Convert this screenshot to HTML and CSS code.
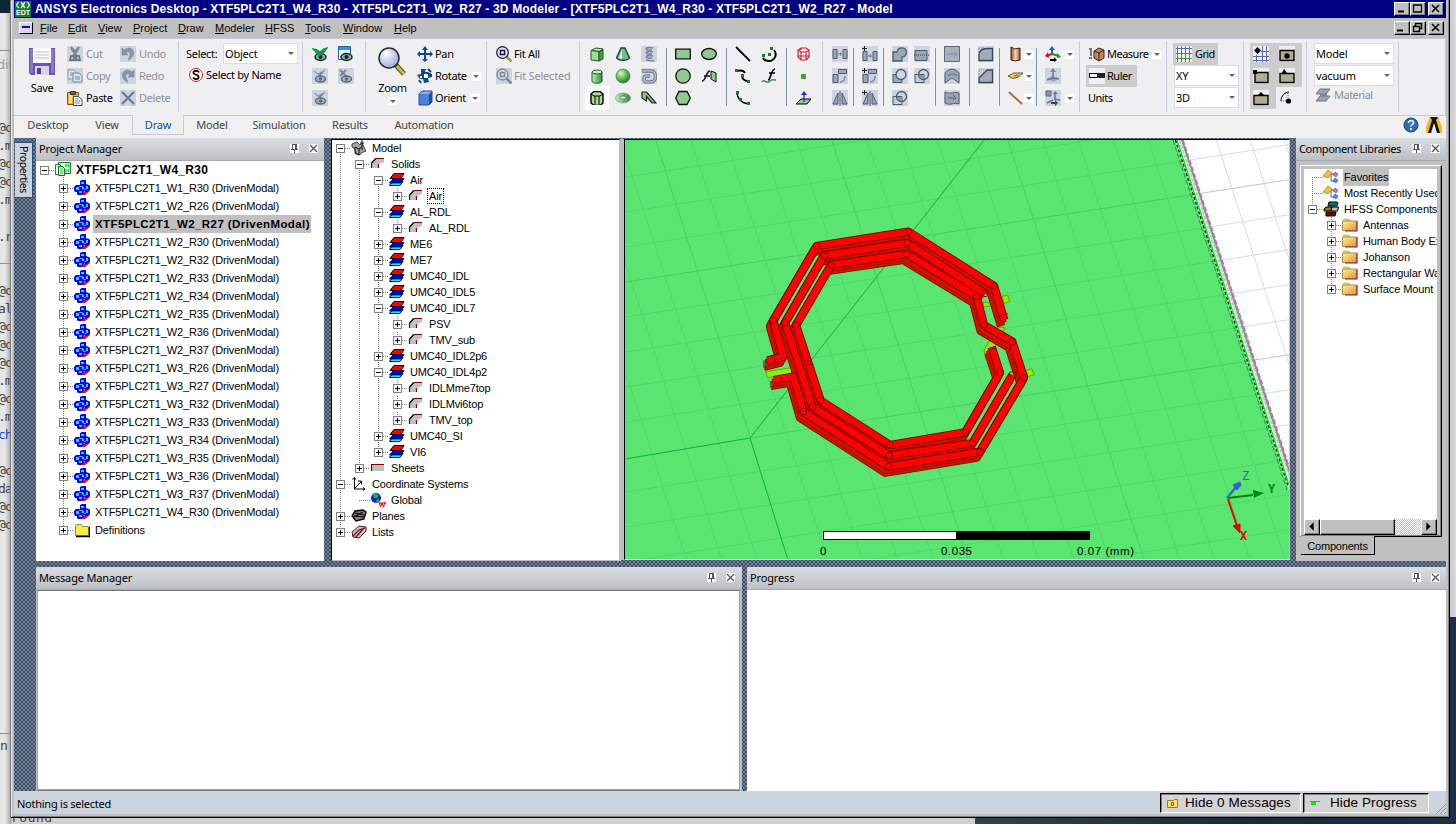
FILE: index.html
```html
<!DOCTYPE html>
<html lang="en">
<head>
<meta charset="utf-8">
<title>ANSYS Electronics Desktop</title>
<link rel="stylesheet" href="styles.css">
</head>
<body>
<svg class="sprite" width="0" height="0">
  <defs>
    <linearGradient id="gGreen" x1="0" x2="1"><stop offset="0" stop-color="#c4efb4"/><stop offset="1" stop-color="#2f8a3c"/></linearGradient>
    <radialGradient id="gBall" cx=".35" cy=".3" r=".8"><stop offset="0" stop-color="#d4f7c0"/><stop offset=".5" stop-color="#62b857"/><stop offset="1" stop-color="#1f6a2c"/></radialGradient>
    <radialGradient id="gLens" cx=".35" cy=".3" r=".8"><stop offset="0" stop-color="#fff"/><stop offset="1" stop-color="#8fa3dd"/></radialGradient>
    <linearGradient id="gFold" x1="0" y1="0" x2="1" y2="1"><stop offset="0" stop-color="#fff3b0"/><stop offset="1" stop-color="#e0951c"/></linearGradient>
    <linearGradient id="gWood" x1="0" x2="1"><stop offset="0" stop-color="#8a4a1c"/><stop offset=".5" stop-color="#ffd9b0"/><stop offset="1" stop-color="#9a5a2a"/></linearGradient>
  </defs>
  <symbol id="save" viewBox="0 0 26 27"><path d="M0 0h26v27H2l-2-2z" fill="#6c55ae"/><path d="M1 1h3v24H1zM22 1h3v24h-3z" fill="#8a78c8"/><path d="M4 0h18v15H4z" fill="#fafafa"/><path d="M6 4h14M6 7h14M6 10h14" stroke="#c4c4cc"/><path d="M6 18h14v9H6z" fill="#d5d5de"/><path d="M8 20h4v6H8z" fill="#55418f"/></symbol>
  <symbol id="cut" viewBox="0 0 16 16"><path d="M4 1l1 3 3 4 3-4 1-3-3 3-1 2-1-2zM8 7l-3 4M8 7l3 4" stroke="#7d8797" stroke-width="1.600" fill="#7d8797"/><path d="M4 10h3v4H3zM9 10h3l1 4H9z" fill="none" stroke="#6b7688" stroke-width="1.800"/></symbol>
  <symbol id="copy" viewBox="0 0 16 16"><path d="M1 2h6l2 2v7H1z" fill="#e2e6ee" stroke="#8b95a6"/><path d="M6 5h6l3 3v6H6z" fill="#dde2ea" stroke="#7d8797"/><path d="M3 5h3M3 7h3M8 9h5M8 11h5" stroke="#7d8797"/></symbol>
  <symbol id="paste" viewBox="0 0 16 16"><path d="M.5 2.500h11v12H.5z" fill="#f0b428" stroke="#7c5a14"/><path d="M2 4h3v9H2z" fill="#ffe08a"/><path d="M3.500 1.500h5v3h-5z" fill="#666" stroke="#333"/><path d="M6.500 6.500h5l3.500 3v6H6.500z" fill="#fff" stroke="#33506e"/><path d="M8 9h3M8 11h5M8 13h5" stroke="#5f8fc8"/></symbol>
  <symbol id="undo" viewBox="0 0 16 16"><path d="M2 2v7h6L6 7c4-3 6 0 2 7 7-2 8-12 0-12L4 4z" fill="#8b95a6" stroke="#7d8797" stroke-width=".6"/></symbol>
  <symbol id="redo" viewBox="0 0 16 16"><path d="M14 2v7H8l2-2C6 4 4 7 8 14 1 12 0 2 8 2l4 2z" fill="#8b95a6" stroke="#7d8797" stroke-width=".6"/></symbol>
  <symbol id="del" viewBox="0 0 16 16"><path d="M2 2l12 12M14 2L2 14" stroke="#6b7688" stroke-width="2"/></symbol>
  <symbol id="sname" viewBox="0 0 16 16"><circle cx="8" cy="8" r="6.500" fill="#fff" stroke="#f01010"/><path d="M11 5.500C10 3 5 3.500 5.500 6c.5 2 5 1.500 5.200 4C10.500 13 6 12.500 5 10.500" fill="none" stroke="#000" stroke-width="1.800"/></symbol>
  <symbol id="eye" viewBox="0 0 16 16"><ellipse cx="8.500" cy="11" rx="5.500" ry="3.500" fill="#8fa9a9" stroke="#102828" stroke-width="1.500"/><circle cx="8.500" cy="11" r="2" fill="#102828"/></symbol>
  <symbol id="show" viewBox="0 0 16 16"><use href="#eye"/><path d="M1 3l4 1 3 2 4-3 3-1-4 5-4 2-2-2z" fill="#119a3f" stroke="#119a3f" stroke-width="1.500"/></symbol>
  <symbol id="showd" viewBox="0 0 16 16"><path d="M.5 .5h12v13H.5z" fill="#eef5fb" stroke="#1d66a8"/><path d="M1 1h11v3H1z" fill="#3e8ed0"/><use href="#eye"/></symbol>
  <symbol id="eyeg" viewBox="0 0 16 16"><path d="M2 3l4 3 7-4-5 6z" fill="#7d8797" stroke="#8b95a6"/><ellipse cx="8.500" cy="11" rx="5" ry="3" fill="#aab3c2" stroke="#5d6879" stroke-width="1.500"/><circle cx="8.500" cy="11" r="1.700" fill="#5d6879"/></symbol>
  <symbol id="eyex" viewBox="0 0 16 16"><path d="M2 2l6 6M8 2L2 8" stroke="#7d8797" stroke-width="2"/><ellipse cx="8.500" cy="11" rx="5" ry="3" fill="#aab3c2" stroke="#5d6879" stroke-width="1.500"/><circle cx="8.500" cy="11" r="1.700" fill="#5d6879"/></symbol>
  <symbol id="zoom" viewBox="0 0 29 29"><path d="M18 18l8 9" stroke="#5c5216" stroke-width="5"/><path d="M19 19l7 8" stroke="#c9b84a" stroke-width="3"/><circle cx="11" cy="11" r="10" fill="url(#gLens)" stroke="#2b2b2b" stroke-width="1.500"/></symbol>
  <symbol id="pan" viewBox="0 0 16 16"><path d="M8 0l3 4H9v3h4V5l3 3-3 3V9H9v4h2l-3 3-3-3h2V9H3v2L0 8l3-3v2h4V4H5z" fill="#0c4a8a"/></symbol>
  <symbol id="rot" viewBox="0 0 16 16"><path d="M4 1h5l-1 3h3l4 2v3l-4 1 1 4-5 1-1-4H3L0 7l4-1z" fill="#0c4a8a"/><path d="M7 6h4v4H7zM3 8h2v2H3z" fill="#fff"/><path d="M11 1l3 3M2 12l2 3" stroke="#0c4a8a" stroke-width="2"/></symbol>
  <symbol id="orient" viewBox="0 0 16 16"><path d="M2 4h10v11H2z" fill="#4a82d8"/><path d="M2 4l3-3h10l-3 3z" fill="#86b0f0"/><path d="M12 4l3-3v11l-3 3z" fill="#234f9c"/><path d="M2 4l3-3h10v11l-3 3H2z" fill="none" stroke="#234f9c"/></symbol>
  <symbol id="fit" viewBox="0 0 16 16"><path d="M10.500 10.500l5 5" stroke="#a8923a" stroke-width="2.500"/><circle cx="6.500" cy="6.500" r="5.800" fill="#dfe6fa" stroke="#202038" stroke-width="1.300"/><path d="M4.500 4.500h4v4h-4z" fill="#fff" stroke="#101040" stroke-width="1.500"/></symbol>
  <symbol id="fitg" viewBox="0 0 16 16"><path d="M10.500 10.500l5 5" stroke="#7d8797" stroke-width="2.500"/><circle cx="6.500" cy="6.500" r="5.500" fill="#d5dae4" stroke="#7d8797" stroke-width="1.300"/><path d="M4.500 4.500h4v4h-4z" fill="none" stroke="#7d8797" stroke-width="1.500"/></symbol>
  <symbol id="box" viewBox="0 0 16 16"><path d="M2 4.500l5-2.500 7 1-4 2.500z" fill="#c9efbb" stroke="#1f5a28"/><path d="M2 4.500l8 1V15l-8-1z" fill="#9ede8e" stroke="#1f5a28"/><path d="M10 5.500l4-2V13l-4 2z" fill="#3f9a48" stroke="#1f5a28"/></symbol>
  <symbol id="cyl" viewBox="0 0 16 16"><path d="M3 4v9c0 3 10 3 10 0V4z" fill="url(#gGreen)" stroke="#1f5a28"/><ellipse cx="8" cy="4" rx="5" ry="2" fill="#c9efbb" stroke="#1f5a28"/></symbol>
  <symbol id="prism" viewBox="0 0 16 16"><path d="M2 4l3-2.500h6L14 4v9l-3 2.500H5L2 13z" fill="#a8dc98" stroke="#000" stroke-width="1.400"/><path d="M2 4l3 2h6l3-2M6 6v9M10 6v9" fill="none" stroke="#000"/></symbol>
  <symbol id="cone" viewBox="0 0 16 16"><path d="M6 2h4l4.500 10c-2 3-11 3-13 0z" fill="#79b889" stroke="#123c4c" stroke-width="1.300"/><path d="M7 3l-3 9 3 1z" fill="#d8f0d4"/></symbol>
  <symbol id="ball" viewBox="0 0 16 16"><circle cx="8" cy="8" r="7" fill="url(#gBall)" stroke="#2c7a38" stroke-width=".7"/></symbol>
  <symbol id="torus" viewBox="0 0 16 16"><ellipse cx="8" cy="8" rx="7.500" ry="5" fill="url(#gGreen)" stroke="#6a9a70" stroke-width=".6"/><ellipse cx="8" cy="7.500" rx="3" ry="1.500" fill="#eef3ee" stroke="#2c6a38" stroke-width=".7"/></symbol>
  <symbol id="helix" viewBox="0 0 16 16"><path d="M12 2C3 0 3 5 11 4M12 6C3 4 3 9 11 8M12 10C3 8 3 13 11 12M5 14l8 1" fill="none" stroke="#7d8797" stroke-width="1.600"/></symbol>
  <symbol id="spiral" viewBox="0 0 16 16"><path d="M1 3h9c6 0 6 11 0 11H6c-4 0-4-6 0-6h3" fill="none" stroke="#6b7688" stroke-width="3.400"/><path d="M1.500 3H10c6 0 6 11 0 11H6c-4 0-4-6 0-6h2.500" fill="none" stroke="#b4bccb" stroke-width="1.600"/></symbol>
  <symbol id="bond" viewBox="0 0 16 16"><path d="M1 2h4.500L15 13h-4L5.500 6.500V11L1 8z" fill="#8fc58d" stroke="#1c241c" stroke-width="1.200"/></symbol>
  <symbol id="rect" viewBox="0 0 16 16"><path d="M.7 3.200h14.600v9.600H.7z" fill="#8fc98f" stroke="#111" stroke-width="1.300"/></symbol>
  <symbol id="circ" viewBox="0 0 16 16"><circle cx="8" cy="8" r="7.200" fill="#8fc98f" stroke="#111" stroke-width="1.300"/></symbol>
  <symbol id="poly" viewBox="0 0 16 16"><path d="M4 1.500h8L15.300 8 12 14.500H4L.7 8z" fill="#8fc98f" stroke="#111" stroke-width="1.300"/></symbol>
  <symbol id="elli" viewBox="0 0 16 16"><ellipse cx="8" cy="8" rx="7.300" ry="5.500" fill="#8fc98f" stroke="#111" stroke-width="1.300"/></symbol>
  <symbol id="eqs" viewBox="0 0 16 16"><path d="M1 13c4 0 4-10 8-10M3 8h6" fill="none" stroke="#111" stroke-width="1.500"/><path d="M10 3l5 2v9l-5-3z" fill="#8fc98f" stroke="#111"/></symbol>
  <symbol id="line" viewBox="0 0 16 16"><path d="M1 1l14 14" stroke="#000" stroke-width="1.800"/></symbol>
  <symbol id="spl" viewBox="0 0 16 16"><path d="M2 3c4-1 7 0 8 2M8 7c-2 3 1 6 5 6" fill="none" stroke="#000" stroke-width="1.800"/><path d="M0 1h3v3H0zM6 6h3v3H6zM12 12h3v3h-3z" fill="#137a3c"/></symbol>
  <symbol id="arc" viewBox="0 0 16 16"><path d="M2 2c0 6 4 11 12 12" fill="none" stroke="#000" stroke-width="1.500"/><path d="M1 1h3v3H1zM4 8h3v3H4zM12 12h3v3h-3z" fill="#137a3c"/></symbol>
  <symbol id="arc2" viewBox="0 0 16 16"><path d="M13 4c4 5 0 11-5 11-3 0-5-1-6-3" fill="none" stroke="#000" stroke-width="2"/><path d="M9 1h3v3H9zM7 7h3v3H7zM1 8h3v3H1z" fill="#137a3c"/></symbol>
  <symbol id="eqc" viewBox="0 0 16 16"><path d="M7 12c3 0 3-11 7-11M8 5h6" fill="none" stroke="#000" stroke-width="1.700"/><path d="M1 14c2-4 5 3 8-1 2-2 3-1 6-1" fill="none" stroke="#4d8a5a" stroke-width="1.600"/></symbol>
  <symbol id="reg" viewBox="0 0 16 16"><path d="M3 4l3-2h5l3 2v7l-3 3H6l-3-3zM3 4l3 2h5l3-2M6 6v8M11 6v8M6 2v2M3 10h11" fill="none" stroke="#cf1b32" stroke-width="1.100"/></symbol>
  <symbol id="pt" viewBox="0 0 16 16"><path d="M6 6h5v5H6z" fill="#3da63d"/></symbol>
  <symbol id="plane" viewBox="0 0 16 16"><path d="M1 14l5-5h10l-4 5z" fill="#8fc98f" stroke="#000"/><path d="M9 12V4" stroke="#2020ff" stroke-width="1.300"/><path d="M6 5l3-4 3 4z" fill="#2020ff"/></symbol>
  <symbol id="dup" viewBox="0 0 16 16"><path d="M1 3.500h4v9H1zM11 3.500h4v9h-4z" fill="#9ea6b4" stroke="#4f5c70"/><path d="M6 8h3" stroke="#6b7688"/><path d="M8 6l2 2-2 2z" fill="#6b7688"/></symbol>
  <symbol id="dupr" viewBox="0 0 16 16"><path d="M1 6.500h5v8H1zM6.500 1.500h8v4h-8z" fill="#9ea6b4" stroke="#4f5c70"/><path d="M8 14c4 0 5-2 5-6" fill="none" stroke="#7d8797" stroke-width="1.500"/></symbol>
  <symbol id="mir" viewBox="0 0 16 16"><path d="M6 3v11H1zM10 3v11h5z" fill="#9ea6b4" stroke="#4f5c70"/><path d="M8 1v15" stroke="#4f5c70"/></symbol>
  <symbol id="plus" viewBox="0 0 16 16"><path d="M0 2.500h5M2.500 0v5" stroke="#222"/></symbol>
  <symbol id="uni" viewBox="0 0 16 16"><path d="M1 6h4c1-6 9-5 9.500 0 .3 3-2 5-4.500 5v4H1z" fill="#9ea6b4" stroke="#4f5c70" stroke-width="1.300"/></symbol>
  <symbol id="sub" viewBox="0 0 16 16"><path d="M1 6.500h9v8H1z" fill="#9ea6b4" stroke="#4f5c70"/><circle cx="9" cy="6.500" r="5" fill="#d0d6e2" stroke="#4f5c70" stroke-width="1.300"/></symbol>
  <symbol id="int" viewBox="0 0 16 16"><path d="M1 6.500h9v8H1z" fill="#c4cbd9" stroke="#4f5c70"/><circle cx="9.500" cy="6.500" r="5" fill="none" stroke="#4f5c70" stroke-width="1.300"/><path d="M5 7h5v4c-3 0-5-2-5-4z" fill="#8b95a6"/></symbol>
  <symbol id="split" viewBox="0 0 16 16"><path d="M1 4.500h12v10H1z" fill="#9ea6b4" stroke="#4f5c70"/><path d="M0 9h16" stroke="#333" stroke-dasharray="1 1"/></symbol>
  <symbol id="move" viewBox="0 0 16 16"><path d="M.5 .5h15v15H.5z" fill="#a9b1bf" stroke="#5d6879"/><path d="M3 8h8M10 5.500L13 8l-3 2.500" fill="none" stroke="#7d8797"/></symbol>
  <symbol id="wrap" viewBox="0 0 16 16"><path d="M1 5c4-5 10-5 14 0v10l-4-3c-2-2-4-2-6 0l-4 3z" fill="#9ea6b4" stroke="#4f5c70"/><path d="M4 8c3-3 6-3 9 0" fill="none" stroke="#5d6879"/></symbol>
  <symbol id="flag" viewBox="0 0 16 16"><path d="M1 2c5 3 9-1 14 1v11c-5-2-9 2-14-1z" fill="#9ea6b4" stroke="#4f5c70"/><path d="M4 8h6M9 5l3 3-3 2" fill="none" stroke="#4f5c70"/></symbol>
  <symbol id="fil" viewBox="0 0 16 16"><path d="M1 14.500V9c0-4 3-6 7-6.500h6.500v12z" fill="#a3abb9" stroke="#3b4658" stroke-width="1.300"/><path d="M1 8V2h6" fill="none" stroke="#7d8797" stroke-dasharray="1 1"/></symbol>
  <symbol id="cham" viewBox="0 0 16 16"><path d="M1 14.500V10l8-8h5.500v12.500z" fill="#a3abb9" stroke="#3b4658" stroke-width="1.300"/><path d="M1 8V2h6" fill="none" stroke="#7d8797" stroke-dasharray="1 1"/></symbol>
  <symbol id="wcyl" viewBox="0 0 16 16"><path d="M3 1l4 2 5-1v12l-5 1-4-1z" fill="url(#gWood)" stroke="#3a2010"/></symbol>
  <symbol id="wsheet" viewBox="0 0 16 16"><path d="M0 8l6-3h9l-5 4-5 1.500z" fill="#f5d97a" stroke="#7a4a14"/><path d="M4 8.500l4-2h4l-3 2z" fill="#a8803a"/></symbol>
  <symbol id="wline" viewBox="0 0 16 16"><path d="M1 2l13 12" stroke="#a9713e" stroke-width="2"/></symbol>
  <symbol id="cs" viewBox="0 0 16 16"><path d="M7 9V2" stroke="#0c64c0" stroke-width="2"/><path d="M4 4l3-4 3 4z" fill="#0c64c0"/><path d="M7 8l7 2" stroke="#109a20" stroke-width="2"/><path d="M12 7l4 4-4 1z" fill="#109a20"/><path d="M7 8l-6 2" stroke="#e01020" stroke-width="2"/><path d="M3 6l-3 4 4 2z" fill="#e01020"/><path d="M5 11v2h4v-2l3 3-3 2v-1H5" fill="#000"/></symbol>
  <symbol id="csg" viewBox="0 0 16 16"><path d="M2 11l5-3 7 2-5 4z" fill="#9ea6b4"/><path d="M8 11V3M8 10l6 1M8 10l-6 2" stroke="#6b7688" stroke-width="1.500"/><path d="M5 4l3-4 3 4z" fill="#7d8797"/></symbol>
  <symbol id="csf" viewBox="0 0 16 16"><path d="M1 1h5v5H1z" fill="#8b95a6" stroke="#5d6879"/><path d="M10 9V3M9 9l6 1M8 10l-6 3" stroke="#6b7688" stroke-width="1.500"/><path d="M8 4l2-3 3 3z" fill="#6b7688"/><path d="M6 12h4v-2l3 3-3 3v-2H6z" fill="#3b4658"/></symbol>
  <symbol id="meas" viewBox="0 0 16 16"><path d="M0 3h3M1 5h2M1 7h2M1 9h2M0 12h3" stroke="#000"/><path d="M5 5l5-3 5 2v8l-5 3-5-3z" fill="#c2885a" stroke="#3c2412"/><path d="M5 5l5 2 5-3M10 7v8" fill="none" stroke="#3c2412"/></symbol>
  <symbol id="ruler" viewBox="0 0 16 16"><path d="M0 0h16v16H0z" fill="#efeff3"/><path d="M.5 5.500h15v4H.5z" fill="#fff" stroke="#000"/><path d="M8 5h8v5H8z" fill="#222"/></symbol>
  <symbol id="grid" viewBox="0 0 16 16"><path d="M0 0h16v16H0z" fill="#f3f3f6"/><path d="M1.500 0v16M5.500 0v16M9.500 0v16M0 2.500h16M0 7.500h16" stroke="#5b66b8"/><path d="M13.500 0v16" stroke="#f04040"/><path d="M0 12.500h16" stroke="#2ea043"/></symbol>
  <symbol id="sgrid" viewBox="0 0 16 16"><path d="M0 0h16v16H0z" fill="#efeff3"/><path d="M9.500 0v16M13.500 0v16M3.500 9v7M0 10.500h16M8 5.500h8M0 14.500h16" stroke="#5b66b8"/><path d="M4.500 1l3.500 3.500L4.500 8 1 4.500z" fill="#000"/></symbol>
  <symbol id="sctr" viewBox="0 0 16 16"><path d="M0 0h16v16H0z" fill="#efeff3"/><path d="M1 4.500h14v10H1z" fill="#b0ae8c" stroke="#000" stroke-width="1.400"/><circle cx="8" cy="10" r="2.700"/></symbol>
  <symbol id="svert" viewBox="0 0 16 16"><path d="M0 0h16v16H0z" fill="#efeff3"/><path d="M2 4.500h13v10H2z" fill="#b0ae8c" stroke="#000" stroke-width="1.400"/><path d="M0 2h4v4H0z"/></symbol>
  <symbol id="sedge" viewBox="0 0 16 16"><path d="M0 0h16v16H0z" fill="#efeff3"/><path d="M1 5.500h14v9H1z" fill="#b0ae8c" stroke="#000" stroke-width="1.400"/><path d="M3 5l2-4 3 4z"/></symbol>
  <symbol id="smid" viewBox="0 0 16 16"><path d="M0 0h16v16H0z" fill="#efeff3"/><path d="M1 5.500h14v9H1z" fill="#b0ae8c" stroke="#000" stroke-width="1.400"/><path d="M4 6l4-4 4 4z"/></symbol>
  <symbol id="squad" viewBox="0 0 16 16"><path d="M2 11c0-5 4-9 8-9" fill="none" stroke="#000"/><path d="M2 11h7V3" fill="none" stroke="#5050e0" stroke-dasharray="1 1"/><circle cx="9.500" cy="11" r="2.600"/></symbol>
  <symbol id="mat" viewBox="0 0 16 16"><path d="M1 7l4-5h10l-4 5zM1 14l4-5h10l-4 5z" fill="#9aa3b3" stroke="#6b7688"/><path d="M5 8h7" stroke="#7d8797" stroke-width="2"/></symbol>
  <symbol id="help" viewBox="0 0 16 16"><circle cx="8" cy="8" r="7" fill="#2a6cc0" stroke="#123a70"/><path d="M5.500 6c0-3.500 5.500-3 5 0-.3 1.500-2.500 1.500-2.500 3.500M8 11v2" fill="none" stroke="#fff" stroke-width="1.600"/></symbol>
  <symbol id="ansys" viewBox="0 0 16 16"><path d="M4 0h8l4 16h-5L8 6l-3 10H0z" fill="#111"/><path d="M4 0L0 10v6h2L6 3zM12 0l4 10v6h-2L10 3z" fill="#f8b81c"/></symbol>
  <symbol id="edt" viewBox="0 0 16 16"><path d="M0 0h16v16H0z" fill="#147a3c"/><path d="M4 1c-3 2-3 4 0 6M6 1c2 2 2 4 0 6M10 1c-2 2-2 4 0 6M12 1c3 2 3 4 0 6" fill="none" stroke="#d8f0d8" stroke-width="1.500"/></symbol>
  <symbol id="proj" viewBox="0 0 16 16"><path d="M3.500 .5h12v11h-12z" fill="#fff" stroke="#0a7a1a"/><path d="M11 2v3M13.500 2v3M11 7v3M13.500 7v3" stroke="#00e020" stroke-width="1.500"/><path d="M.5 2.500h5v10h-5z" fill="#fff" stroke="#0a9a1a"/><path d="M3.500 4.500h4l2 2v7h-6z" fill="#eaffea" stroke="#0a7a1a"/><path d="M5 7h3M5 9h3M5 11h3" stroke="#00d020"/></symbol>
  <symbol id="dsn" viewBox="0 0 16 16"><path d="M5 15h6l5-4V6l-6 6z" fill="#f00"/><path d="M6 1l2-1h4v4l3 1 1 1v3l-3 3-3-1-1 3-2 1H4l-1-1v-2H1l-1-2V7l2-2h4z" fill="#00f"/><path d="M7 2h3v2H7zM2 7h3v3H2zM8 7h2v2H8zM12 6h2v3h-2zM5 11h3v2H5z" fill="#10e0f8"/><path d="M5 6h4v1H5zM10 9h2v1h-2z" fill="#80a0ff"/></symbol>
  <symbol id="defs" viewBox="0 0 16 16"><path d="M1.500 4.500l1-2h5l1 2h6v9h-13z" fill="#f4ee48" stroke="#8e8e40"/><path d="M2 14.500h13.500V5" fill="none" stroke="#000" stroke-width="1.300"/></symbol>
  <symbol id="model" viewBox="0 0 16 16"><path d="M1 4l5-2 3 3 2-2 4 8-5 2-1 2-4-1-1-5-3-2z" fill="#a4a4a4" stroke="#222" stroke-width=".8"/><path d="M4 7l4 2v6M11 0v10M4 7v6l4 2M8 9l3-2M9 3h4" fill="none" stroke="#111"/></symbol>
  <symbol id="solid" viewBox="0 0 16 16"><path d="M1 12V7l4-5h9v4l-5 2v4z" fill="#c0c0c0"/><path d="M1.500 12V7M8.500 12V8M6 2.500h8" fill="none" stroke="#800000" stroke-width="1.200"/><path d="M1.500 7L6 2.500" stroke="#000" stroke-width="1.200"/></symbol>
  <symbol id="layer" viewBox="0 0 16 16"><path d="M.5 13.500l3-4H14l-3 4z" fill="#0ff" stroke="#000"/><path d="M.5 11l4-4.500h10.500L12 11z" fill="#0000f8" stroke="#000" stroke-width=".8"/><path d="M1 6.500l4-5h10l-3 5z" fill="#f00" stroke="#000"/></symbol>
  <symbol id="sheet" viewBox="0 0 16 16"><path d="M1 4h13v7H1z" fill="#c0c0c0"/><path d="M1.500 11V4.500H14" fill="none" stroke="#800000" stroke-width="1.200"/></symbol>
  <symbol id="axes" viewBox="0 0 16 16"><path d="M3.500 2v11H14M1.500 3.500l2-2 1 2M12 11.500l2 1.500-2 1.500M4 12l6-6M7 5h3.500v3.500" fill="none" stroke="#000"/></symbol>
  <symbol id="globe" viewBox="0 0 16 16"><circle cx="6" cy="6" r="5" fill="#1020e0"/><path d="M3 2l3-1 3 3-2 2H4zM6 8l3-1v3l-2 1z" fill="#10c020"/><path d="M9 10l1.500 5 1.500-4 1.500 4L15 10M9 11h7" fill="none" stroke="#e00000"/></symbol>
  <symbol id="planes" viewBox="0 0 16 16"><path d="M1 8l3-5 8-1 3 2-2 7-8 2z" fill="#808080" stroke="#000" stroke-width="1.400"/><path d="M3 9l9-5M4 5l9 2M2 8l11 1" stroke="#000" stroke-width="1.200"/></symbol>
  <symbol id="lists" viewBox="0 0 16 16"><path d="M1 8l7-6 7 1v4l-7 7-6-1z" fill="#c0c0c0" stroke="#701010"/><path d="M2 12l6-6 6-2M5 13l7-8" fill="none" stroke="#701010" stroke-width="1.200"/></symbol>
  <symbol id="fav" viewBox="0 0 16 16"><path d="M6 5h6M8 5v7h4" fill="none" stroke="#506080"/><path d="M5 1l4 3-4 5-5-2z" fill="#f4c030" stroke="#a87410" stroke-width=".7"/><path d="M12 3l3 2-2 3-3-2z" fill="#d860e0" stroke="#8a2a90" stroke-width=".6"/><path d="M12 9l3 2-2 3-3-2z" fill="#4a90f0" stroke="#1c4a98" stroke-width=".6"/></symbol>
  <symbol id="comp" viewBox="0 0 16 16"><path d="M6 1h8l1 1-1 3H5z" fill="#0a7a7a" stroke="#000"/><path d="M1 8l2-2h6l-1 4H1z" fill="#8a8000" stroke="#000"/><path d="M9 6h6.500l-1 4H8z" fill="#c0c0c0" stroke="#000"/><path d="M3 11h10l-1 4H3z" fill="#7a0000" stroke="#000"/></symbol>
  <symbol id="fold" viewBox="0 0 16 16"><path d="M1 4l1-2h5l1 2z" fill="#e8dca0" stroke="#b8a050" stroke-width=".6"/><path d="M.5 4h14v9.500H.5z" fill="url(#gFold)" stroke="#b07a18" stroke-width=".8"/><path d="M15 4v10H3" fill="none" stroke="#8a1a6a" stroke-width="1.200"/></symbol>
  <symbol id="pin" viewBox="0 0 9 9"><path d="M0 0h9v9H0z" fill="#fff"/><path d="M2.500 0v5M5.500 0v5M6.500 0v5M2 .5h5M1 5.500h7M4.500 5v4" stroke="#555" fill="none"/></symbol>
  <symbol id="cls" viewBox="0 0 9 9"><path d="M0 0h9v9H0z" fill="#fff"/><path d="M1 1l7 7M8 1L1 8" stroke="#555" stroke-width="1.300"/></symbol>
</svg>

<div class="desktop">
  <div class="bgtop"></div>
  <div class="bgline l1"></div><div class="bgline l2"></div><div class="bgline l3"></div>
  <div class="bgtext"><span class="b1">dit</span><span class="b2">@c</span><span class="b3">.m</span><span class="b4">@c</span><span class="b5">@c</span><span class="b6">.m</span><span class="b7">.r</span><span class="b8">@c</span><span class="b9">al</span><span class="b10">@c</span><span class="b11">@c</span><span class="b12">@c</span><span class="b13">.m</span><span class="b14">@c</span><span class="b15">.m</span><span class="b16">ch</span><span class="b17">@c</span><span class="b18">da</span><span class="b19">@c</span><span class="b20">@c</span><span class="b21">n</span><span class="b22">round</span></div>
  <div class="bgdark"></div>
  <main class="window">
    <header class="title"><div class="logo"><svg class="i16"><use href="#edt"/></svg><em>EDT</em></div><span>ANSYS Electronics Desktop - XTF5PLC2T1_W4_R30 - XTF5PLC2T1_W2_R27 - 3D Modeler - [XTF5PLC2T1_W4_R30 - XTF5PLC2T1_W2_R27 - Model</span>
      <div class="wb"><b><svg viewBox="0 0 13 11"><path d="M3 8.500h6" stroke="#000" stroke-width="2"/></svg></b><b><svg viewBox="0 0 13 11"><path d="M2.500 2h8v7h-8zM2 2h9" fill="none" stroke="#000" stroke-width="1.300"/></svg></b><b class="sp"><svg viewBox="0 0 13 11"><path d="M3 2l7 7M10 2L3 9" stroke="#000" stroke-width="1.600"/></svg></b></div></header>
    <nav class="menu"><i class="mdi"></i><span><u>F</u>ile</span><span><u>E</u>dit</span><span><u>V</u>iew</span><span><u>P</u>roject</span><span><u>D</u>raw</span><span><u>M</u>odeler</span><span><u>H</u>FSS</span><span><u>T</u>ools</span><span><u>W</u>indow</span><span><u>H</u>elp</span>
      <div class="wb"><b><svg viewBox="0 0 13 11"><path d="M2 8.500h6" stroke="#000" stroke-width="2"/></svg></b><b><svg viewBox="0 0 13 11"><path d="M4.500 1.500h6v5h-6z" fill="none" stroke="#000" stroke-width="1.500"/><path d="M2.500 4.500h6v5h-6z" fill="#c0c0c0" stroke="#000" stroke-width="1.400"/></svg></b><b class="sp"><svg viewBox="0 0 13 11"><path d="M3 2l7 7M10 2L3 9" stroke="#000" stroke-width="1.600"/></svg></b></div></nav>

    <section class="ribbon">
      <div class="grp g1">
        <div class="big save"><svg width="26" height="27"><use href="#save"/></svg><span>Save</span></div>
        <div class="col c2"><div class="off"><svg class="i16"><use href="#cut"/></svg>Cut</div><div class="off"><svg class="i16"><use href="#copy"/></svg>Copy</div><div><svg class="i16"><use href="#paste"/></svg>Paste</div></div>
        <div class="col"><div class="off"><svg class="i16"><use href="#undo"/></svg>Undo</div><div class="off"><svg class="i16"><use href="#redo"/></svg>Redo</div><div class="off"><svg class="i16"><use href="#del"/></svg>Delete</div></div>
      </div>
      <div class="grp g2"><div class="selrow">Select:<div class="combo w75">Object</div></div><div class="nrow"><svg class="i16"><use href="#sname"/></svg>Select by Name</div></div>
      <div class="grp g3"><div class="ic"><svg><use href="#show"/></svg><svg class="d"><use href="#eyeg"/></svg><svg class="d"><use href="#eyeg"/></svg></div><div class="ic m10"><svg><use href="#showd"/></svg><svg class="d"><use href="#eyex"/></svg></div></div>
      <div class="grp g4"><div class="big zoomb"><svg width="29" height="29"><use href="#zoom"/></svg><span>Zoom</span><i class="dd"></i></div>
        <div class="col"><div><svg class="i16"><use href="#pan"/></svg>Pan</div><div><svg class="i16"><use href="#rot"/></svg>Rotate<i class="dd"></i></div><div><svg class="i16"><use href="#orient"/></svg>Orient<i class="dd"></i></div></div></div>
      <div class="grp g5"><div class="col"><div><svg class="i16"><use href="#fit"/></svg>Fit All</div><div class="off"><svg class="i16"><use href="#fitg"/></svg>Fit Selected</div></div></div>
      <div class="grp g6">
        <div class="ic"><svg><use href="#box"/></svg><svg><use href="#cyl"/></svg><svg class="on"><use href="#prism"/></svg></div>
        <div class="ic m10"><svg><use href="#cone"/></svg><svg><use href="#ball"/></svg><svg><use href="#torus"/></svg></div>
        <div class="ic m10"><svg class="d"><use href="#helix"/></svg><svg class="d"><use href="#spiral"/></svg><svg><use href="#bond"/></svg></div>
        <i class="sep m9"></i>
        <div class="ic m8"><svg><use href="#rect"/></svg><svg><use href="#circ"/></svg><svg><use href="#poly"/></svg></div>
        <div class="ic m10"><svg><use href="#elli"/></svg><svg><use href="#eqs"/></svg></div>
        <i class="sep m9"></i>
        <div class="ic m8"><svg><use href="#line"/></svg><svg><use href="#spl"/></svg><svg><use href="#arc"/></svg></div>
        <div class="ic m10"><svg><use href="#arc2"/></svg><svg><use href="#eqc"/></svg></div>
        <i class="sep m9"></i>
        <div class="ic m8"><svg><use href="#reg"/></svg><svg><use href="#pt"/></svg><svg><use href="#plane"/></svg></div>
      </div>
      <div class="grp g7">
        <div class="ic"><svg class="d"><use href="#dup"/></svg><svg class="d"><use href="#dupr"/></svg><svg class="d"><use href="#mir"/></svg></div>
        <i class="sep m5"></i>
        <div class="ic m8"><svg class="d"><use href="#dup" y="2"/><use href="#plus"/></svg><svg class="d"><use href="#dupr"/><use href="#plus"/></svg><svg class="d"><use href="#mir"/><use href="#plus"/></svg></div>
        <i class="sep m5"></i>
        <div class="ic m8"><svg class="d"><use href="#uni"/></svg><svg class="d"><use href="#sub"/></svg><svg class="d"><use href="#int"/></svg></div>
        <div class="ic m6"><svg class="d"><use href="#split"/></svg><svg class="d"><use href="#int"/></svg></div>
        <i class="sep m5"></i>
        <div class="ic m8"><svg class="d"><use href="#move"/></svg><svg class="d"><use href="#wrap"/></svg><svg class="d"><use href="#flag"/></svg></div>
        <i class="sep m9"></i>
        <div class="ic m8"><svg class="d"><use href="#fil"/></svg><svg class="d"><use href="#cham"/></svg></div>
        <i class="sep m5"></i>
        <div class="ic m8"><svg><use href="#wcyl"/></svg><svg><use href="#wsheet"/></svg><svg><use href="#wline"/></svg></div>
        <div class="dds"><i class="dd"></i><i class="dd"></i><i class="dd"></i></div>
        <i class="sep m3"></i>
        <div class="ic m8"><svg><use href="#cs"/></svg><svg class="d"><use href="#csg"/></svg><svg class="d"><use href="#csf"/></svg></div>
        <div class="dds m4"><i class="dd"></i><i class="dd hid"></i><i class="dd"></i></div>
      </div>
      <div class="grp g8"><div class="col"><div><svg class="i16"><use href="#meas"/></svg>Measure<i class="dd"></i></div><div><span class="hl"><svg class="i16"><use href="#ruler"/></svg>Ruler</span></div><div>Units</div></div></div>
      <div class="grp g9"><span class="hl"><svg class="i16"><use href="#grid"/></svg>Grid</span><div class="combo">XY</div><div class="combo">3D</div></div>
      <div class="grp g10"><div class="snap"><svg class="i16"><use href="#sgrid"/></svg><svg class="i16"><use href="#sctr"/></svg><svg class="i16"><use href="#svert"/></svg><svg class="i16"><use href="#sedge"/></svg></div><div class="snap half"><svg class="i16"><use href="#smid"/></svg><svg class="i16"><use href="#squad"/></svg></div></div>
      <div class="grp g11"><div class="combo">Model</div><div class="combo">vacuum</div><div class="off mt"><svg class="i16"><use href="#mat"/></svg>Material</div></div>
    </section>
    <nav class="tabs"><span class="t1">Desktop</span><span class="t2">View</span><span class="t3">Draw</span><span class="t4">Model</span><span class="t5">Simulation</span><span class="t6">Results</span><span class="t7">Automation</span><div class="tr"><svg class="i16"><use href="#help"/></svg><svg class="i16"><use href="#ansys"/></svg></div></nav>

    <section class="work">
      <aside class="strip"><span class="vt">Properties</span></aside>
      <div class="panes">
        <div class="upper">
          <section class="pm">
            <h2 class="ph">Project Manager<svg class="pn"><use href="#pin"/></svg><svg class="pc"><use href="#cls"/></svg></h2>
            <div class="ptree">
              <div class="r root"><i class="x m"></i><svg class="i16"><use href="#proj"/></svg><b>XTF5PLC2T1_W4_R30</b></div>
              <div class="r"><i class="x"></i><svg class="i16"><use href="#dsn"/></svg><span>XTF5PLC2T1_W1_R30 (DrivenModal)</span></div>
              <div class="r"><i class="x"></i><svg class="i16"><use href="#dsn"/></svg><span>XTF5PLC2T1_W2_R26 (DrivenModal)</span></div>
              <div class="r"><i class="x"></i><svg class="i16"><use href="#dsn"/></svg><b class="cur">XTF5PLC2T1_W2_R27 (DrivenModal)</b></div>
              <div class="r"><i class="x"></i><svg class="i16"><use href="#dsn"/></svg><span>XTF5PLC2T1_W2_R30 (DrivenModal)</span></div>
              <div class="r"><i class="x"></i><svg class="i16"><use href="#dsn"/></svg><span>XTF5PLC2T1_W2_R32 (DrivenModal)</span></div>
              <div class="r"><i class="x"></i><svg class="i16"><use href="#dsn"/></svg><span>XTF5PLC2T1_W2_R33 (DrivenModal)</span></div>
              <div class="r"><i class="x"></i><svg class="i16"><use href="#dsn"/></svg><span>XTF5PLC2T1_W2_R34 (DrivenModal)</span></div>
              <div class="r"><i class="x"></i><svg class="i16"><use href="#dsn"/></svg><span>XTF5PLC2T1_W2_R35 (DrivenModal)</span></div>
              <div class="r"><i class="x"></i><svg class="i16"><use href="#dsn"/></svg><span>XTF5PLC2T1_W2_R36 (DrivenModal)</span></div>
              <div class="r"><i class="x"></i><svg class="i16"><use href="#dsn"/></svg><span>XTF5PLC2T1_W2_R37 (DrivenModal)</span></div>
              <div class="r"><i class="x"></i><svg class="i16"><use href="#dsn"/></svg><span>XTF5PLC2T1_W3_R26 (DrivenModal)</span></div>
              <div class="r"><i class="x"></i><svg class="i16"><use href="#dsn"/></svg><span>XTF5PLC2T1_W3_R27 (DrivenModal)</span></div>
              <div class="r"><i class="x"></i><svg class="i16"><use href="#dsn"/></svg><span>XTF5PLC2T1_W3_R32 (DrivenModal)</span></div>
              <div class="r"><i class="x"></i><svg class="i16"><use href="#dsn"/></svg><span>XTF5PLC2T1_W3_R33 (DrivenModal)</span></div>
              <div class="r"><i class="x"></i><svg class="i16"><use href="#dsn"/></svg><span>XTF5PLC2T1_W3_R34 (DrivenModal)</span></div>
              <div class="r"><i class="x"></i><svg class="i16"><use href="#dsn"/></svg><span>XTF5PLC2T1_W3_R35 (DrivenModal)</span></div>
              <div class="r"><i class="x"></i><svg class="i16"><use href="#dsn"/></svg><span>XTF5PLC2T1_W3_R36 (DrivenModal)</span></div>
              <div class="r"><i class="x"></i><svg class="i16"><use href="#dsn"/></svg><span>XTF5PLC2T1_W3_R37 (DrivenModal)</span></div>
              <div class="r"><i class="x"></i><svg class="i16"><use href="#dsn"/></svg><span>XTF5PLC2T1_W4_R30 (DrivenModal)</span></div>
              <div class="r"><i class="x"></i><svg class="i16"><use href="#defs"/></svg><span>Definitions</span></div>
            </div>
          </section>
          <section class="mtree">
            <div class="r"><i class="x m"></i><svg class="i16"><use href="#model"/></svg><span>Model</span></div>
            <div class="r d1"><i class="x m"></i><svg class="i16"><use href="#solid"/></svg><span>Solids</span></div>
            <div class="r d2"><i class="x m"></i><svg class="i16"><use href="#layer"/></svg><span>Air</span></div>
            <div class="r d3"><i class="x"></i><svg class="i16"><use href="#solid"/></svg><span class="foc">Air</span></div>
            <div class="r d2"><i class="x m"></i><svg class="i16"><use href="#layer"/></svg><span>AL_RDL</span></div>
            <div class="r d3"><i class="x"></i><svg class="i16"><use href="#solid"/></svg><span>AL_RDL</span></div>
            <div class="r d2"><i class="x"></i><svg class="i16"><use href="#layer"/></svg><span>ME6</span></div>
            <div class="r d2"><i class="x"></i><svg class="i16"><use href="#layer"/></svg><span>ME7</span></div>
            <div class="r d2"><i class="x"></i><svg class="i16"><use href="#layer"/></svg><span>UMC40_IDL</span></div>
            <div class="r d2"><i class="x"></i><svg class="i16"><use href="#layer"/></svg><span>UMC40_IDL5</span></div>
            <div class="r d2"><i class="x m"></i><svg class="i16"><use href="#layer"/></svg><span>UMC40_IDL7</span></div>
            <div class="r d3"><i class="x"></i><svg class="i16"><use href="#solid"/></svg><span>PSV</span></div>
            <div class="r d3"><i class="x"></i><svg class="i16"><use href="#solid"/></svg><span>TMV_sub</span></div>
            <div class="r d2"><i class="x"></i><svg class="i16"><use href="#layer"/></svg><span>UMC40_IDL2p6</span></div>
            <div class="r d2"><i class="x m"></i><svg class="i16"><use href="#layer"/></svg><span>UMC40_IDL4p2</span></div>
            <div class="r d3"><i class="x"></i><svg class="i16"><use href="#solid"/></svg><span>IDLMme7top</span></div>
            <div class="r d3"><i class="x"></i><svg class="i16"><use href="#solid"/></svg><span>IDLMvi6top</span></div>
            <div class="r d3"><i class="x"></i><svg class="i16"><use href="#solid"/></svg><span>TMV_top</span></div>
            <div class="r d2"><i class="x"></i><svg class="i16"><use href="#layer"/></svg><span>UMC40_SI</span></div>
            <div class="r d2"><i class="x"></i><svg class="i16"><use href="#layer"/></svg><span>VI6</span></div>
            <div class="r d1"><i class="x"></i><svg class="i16"><use href="#sheet"/></svg><span>Sheets</span></div>
            <div class="r"><i class="x m"></i><svg class="i16"><use href="#axes"/></svg><span>Coordinate Systems</span></div>
            <div class="r d1"><i class="x none"></i><svg class="i16"><use href="#globe"/></svg><span>Global</span></div>
            <div class="r"><i class="x"></i><svg class="i16"><use href="#planes"/></svg><span>Planes</span></div>
            <div class="r"><i class="x"></i><svg class="i16"><use href="#lists"/></svg><span>Lists</span></div>
          </section>
          <section class="view">
            <svg width="664" height="419" viewBox="625 140 664 419">
              <defs>
                <g id="hl"><path d="M600 251l700-108M600 216l700-108M600 181l700-108M600 146l700-108M600 321l700-108M600 356l700-108M600 391l700-108M600 426l700-108M600 496l700-108M600 531l700-108M600 566l700-108M600 601l700-108M600 671l700-108M600 636l700-108"/></g>
                <g id="vl"><path d="M546.900 130l143 440M582.100 130l143 440M617.300 130l143 440M687.700 130l143 440M722.900 130l143 440M758.100 130l143 440M793.300 130l143 440M863.700 130l143 440M898.900 130l143 440M934.100 130l143 440M969.300 130l143 440M1039.700 130l143 440M1074.900 130l143 440M1110.100 130l143 440M1145.300 130l143 440M1213 130l143 440M1247 130l143 440M1281 130l143 440"/></g>
                <path id="t1" d="M763 315L732 213 475 50 200 93 70 316 100 425 52 437"/>
                <path id="t2" d="M705 235L472 84 222 122 105 323 187 575 418 722 668 684 787 480"/>
                <path id="t3" d="M725 396L750 473 646 652 420 690 212 557 138 330 243 150 470 117 680 245 702 330 787 380 822 488 690 710 416 755 160 590 130 485 72 495"/>
                <g id="coil"><use href="#t1"/><use href="#t2"/><use href="#t3"/></g>
                <clipPath id="gc"><path d="M625 140h550l114 350v70H625z"/></clipPath>
              </defs>
              <path d="M625 140h664v420H625z" fill="#fff"/>
              <g stroke="#d9d9ea" fill="none"><use href="#hl"/><use href="#vl"/><path d="M600 286l700-108M600 461l700-108" stroke="#c0c0dc"/></g>
              <path d="M625 140h550l114 350v70H625z" fill="#5ae570"/>
              <g clip-path="url(#gc)" stroke="#51d66a" fill="none"><use href="#hl"/><use href="#vl"/><path d="M600 286l700-108M750 438l550-85M828.500 130l143 440M1004.500 130l143 440M652.500 130l98 308" stroke="#46cd66"/></g>
              <path d="M625 459l125-21 38 122M750 438l235-299" fill="none" stroke="#0fae46"/>
              <path d="M1173 140l114 350" stroke="#189c48" stroke-dasharray="5 2"/>
              <path d="M1175.500 140l113 347" stroke="#000" stroke-width="1.400" stroke-dasharray="3 2"/>
              <path d="M1177 140l112 345" stroke="#00e818" stroke-width="1.500"/>
              <path d="M1179.500 140l111 340" stroke="#c8c8c8" stroke-width="2" stroke-dasharray="4 1"/>
              <path d="M1182 140l108 333" stroke="#18e030" stroke-width="2"/><path d="M1182.700 140l108 333" stroke="#f050d0" stroke-width="2.200" stroke-dasharray="5 2"/>
              <g transform="translate(750 215) scale(.33333)" fill="none" stroke-linejoin="round">
                <path d="M47 470l78-12v18l-72 12zM700 262h20v12h-20zM757 244l16-4 6 20-18 6zM745 337l18 0-2 12-18-2zM720 375l-18 30 6 25 30-40zM829 466l17-5 6 18-18 6z" fill="#8cf000" stroke="#64a800" stroke-width="3"/>
                <g stroke="#800600" stroke-width="25"><use href="#coil" x="-10" y="18"/><use href="#coil" x="-5" y="9"/></g>
                <g stroke="#d01400" stroke-width="20"><use href="#coil" x="-10" y="18"/><use href="#coil" x="-7" y="13"/><use href="#coil" x="-4" y="8"/></g>
                <g stroke="#980a00" stroke-width="2"><use href="#coil" x="-12" y="21"/></g>
                <use href="#coil" stroke="#700000" stroke-width="25"/>
                <use href="#coil" stroke="#ff0200" stroke-width="20"/>
                <g stroke="#900000" stroke-width="3"><circle cx="475" cy="50" r="10"/><circle cx="472" cy="84" r="10"/><circle cx="470" cy="117" r="10"/><circle cx="200" cy="93" r="10"/><circle cx="222" cy="122" r="10"/><circle cx="243" cy="150" r="10"/><circle cx="70" cy="316" r="10"/><circle cx="105" cy="323" r="10"/><circle cx="138" cy="330" r="10"/><circle cx="212" cy="557" r="10"/><circle cx="187" cy="575" r="10"/><circle cx="160" cy="590" r="10"/><circle cx="420" cy="690" r="10"/><circle cx="418" cy="722" r="10"/><circle cx="416" cy="755" r="10"/><circle cx="646" cy="652" r="10"/><circle cx="668" cy="684" r="10"/><circle cx="690" cy="710" r="10"/><circle cx="750" cy="473" r="10"/><circle cx="787" cy="480" r="10"/><circle cx="822" cy="488" r="10"/><circle cx="787" cy="380" r="10"/><circle cx="702" cy="330" r="10"/><circle cx="680" cy="245" r="10"/><circle cx="705" cy="235" r="10"/><circle cx="732" cy="213" r="10"/><path d="M165 438h20M170 448h20M753 302l20-6M716 405l20-6M72 424l5 20M93 484l4 18"/></g>
                <path d="M42 436v20M62 498v20" stroke="#3a7a70" stroke-width="5"/>
              </g>
              <path d="M823.500 531.500h266v8h-266z" fill="#fff" stroke="#000"/><path d="M956 531h134v9H956z"/>
              <g class="lab"><text x="820" y="555">0</text><text x="941" y="555" textLength="31">0.035</text><text x="1077" y="555" textLength="57">0.07 (mm)</text></g>
              <path d="M1228 499l9 27" stroke="#f00000" stroke-width="2"/><path d="M1233 526l7-2v9z" fill="#e80000" stroke="#e80000"/>
              <path d="M1228 498l25-3" stroke="#008a00" stroke-width="2"/><path d="M1253 490l11 3-10 5z" fill="#008a00"/>
              <path d="M1227 498l9-11" stroke="#3a5ad8" stroke-width="2"/><path d="M1233 485l7-3 1 3-4 5z" fill="#3a5ad8" stroke="#3a5ad8"/>
              <g class="axl"><text x="1242" y="480" fill="#3a5ae0">Z</text><text x="1268" y="493" fill="#008a00" font-weight="bold">Y</text><text x="1240" y="540" fill="#f00000" font-weight="bold">X</text></g>
            </svg>
          </section>
          <section class="cl">
            <h2 class="ph">Component Libraries<svg class="pn"><use href="#pin"/></svg><svg class="pc"><use href="#cls"/></svg></h2>
            <div class="cbox"><div class="ctree">
              <div class="r"><i class="x none"></i><svg class="i16"><use href="#fav"/></svg><span class="sel">Favorites</span></div>
              <div class="r"><i class="x none"></i><svg class="i16"><use href="#fav"/></svg><span>Most Recently Used</span></div>
              <div class="r"><i class="x m"></i><svg class="i16"><use href="#comp"/></svg><span>HFSS Components</span></div>
              <div class="r d1"><i class="x"></i><svg class="i16"><use href="#fold"/></svg><span>Antennas</span></div>
              <div class="r d1"><i class="x"></i><svg class="i16"><use href="#fold"/></svg><span>Human Body Ex</span></div>
              <div class="r d1"><i class="x"></i><svg class="i16"><use href="#fold"/></svg><span>Johanson</span></div>
              <div class="r d1"><i class="x"></i><svg class="i16"><use href="#fold"/></svg><span>Rectangular Wa</span></div>
              <div class="r d1"><i class="x"></i><svg class="i16"><use href="#fold"/></svg><span>Surface Mount</span></div>
            </div>
            <div class="hs"><b><svg viewBox="0 0 12 12"><path d="M8 2v8L4 6z"/></svg></b><b class="th"></b><b class="rt"><svg viewBox="0 0 12 12"><path d="M4 2v8l4-4z"/></svg></b></div></div>
            <div class="ctab">Components</div>
          </section>
        </div>
        <div class="lower">
          <section class="mm"><h2 class="ph">Message Manager<svg class="pn"><use href="#pin"/></svg><svg class="pc"><use href="#cls"/></svg></h2><div class="mb"></div></section>
          <section class="pg"><h2 class="ph">Progress<svg class="pn"><use href="#pin"/></svg><svg class="pc"><use href="#cls"/></svg></h2><div class="pb"></div></section>
        </div>
      </div>
    </section>
    <footer class="status"><span>Nothing is selected</span>
      <button class="sb s1"><svg width="11" height="9"><path d="M.5 1.500h6l1-1h3v8H.5z" fill="#ffe070" stroke="#9a7a30"/><path d="M4.500 3.500h2v3h-2z" fill="none" stroke="#80601c"/></svg>Hide 0 Messages</button><button class="sb s2"><svg width="10" height="5"><path d="M0 0h10v1H0z" fill="#808080"/><path d="M1 1h5v3H1z" fill="#00f000"/></svg>Hide Progress</button>
      <svg class="grip" width="10" height="10"><path d="M0 10L10 0M4 10l6-6M8 10l2-2" stroke="#8a8f96"/></svg></footer>
  </main>
</div>
</body>
</html>
```
FILE: styles.css
```css
* { box-sizing: border-box; }
body { margin: 0; width: 1456px; height: 824px; overflow: hidden; font: 11px/16px "Liberation Sans", sans-serif; color: #000; }
.sprite { position: absolute; }
svg { display: block; flex: none; }
.i16 { width: 16px; height: 16px; flex: none; }
i { font-style: normal; flex: none; }

/* desktop behind the window */
.desktop { position: relative; width: 1456px; height: 824px; background: linear-gradient(90deg, #e6e6e6 0 5px, #a8a8a8 11px, #d0d0d0 12px 1448px, #c6c6c8 1449px, #dcdcde 1456px); overflow: hidden; }
.bgtop { position: absolute; left: 0; top: 0; width: 14px; height: 13px; background: #0f2638; }
.bgdark { position: absolute; inset: 617px 0 0 975px; background: linear-gradient(90deg, #2a4548, #16293e 60%, #1a3048); }
.bgline { position: absolute; left: 0; width: 10px; height: 1px; background: #909090; }
.l1 { top: 50px; } .l2 { top: 263px; } .l3 { top: 733px; }
.bgtext { font: 13px/16px "DejaVu Sans Mono", monospace; color: #444; }
.bgtext span { position: absolute; left: -2px; letter-spacing: -1px; }
.bgtext .b1 { top: 56px; left: -3px; color: #999; font-family: "Noto Sans", sans-serif; letter-spacing: 0; } .b2 { top: 120px; } .b3 { top: 138px; } .b4 { top: 156px; } .b5 { top: 174px; } .b6 { top: 192px; } .b7 { top: 229px; } .b8 { top: 283px; } .b9 { top: 301px; } .b10 { top: 319px; } .b11 { top: 337px; } .b12 { top: 355px; } .b13 { top: 373px; } .b14 { top: 391px; } .b15 { top: 409px; } .b16 { top: 427px; color: #2040d0; } .b17 { top: 463px; } .b18 { top: 481px; } .b19 { top: 499px; } .b20 { top: 517px; } .b21 { top: 738px; }
.bgtext .b21 { left: 0; }
.bgtext .b22 { top: 810px; left: 11px; letter-spacing: .5px; }

.window { position: absolute; left: 11px; top: 0; width: 1439px; height: 818px; padding: 0 3px 3px 3px; background: #c0c0c0; border-right: 1px solid #000; border-bottom: 1px solid #000; box-shadow: inset 1px 0 #e8e8e8, inset -1px -1px #808080, -1px 0 #777; display: flex; flex-direction: column; }
.title { height: 18px; flex: none; background: #000080; color: #fff; font-weight: bold; font-size: 12px; letter-spacing: .165px; display: flex; align-items: center; padding-left: 1px; white-space: nowrap; }
.title > span { margin-left: 4px; }
.logo { position: relative; width: 16px; height: 16px; }
.logo em { position: absolute; left: 0; top: 8px; width: 16px; text-align: center; font: bold 7px/8px "Liberation Sans", sans-serif; letter-spacing: 0; }
.wb { display: flex; margin-left: auto; padding-right: 2px; }
.wb b { width: 16px; height: 14px; background: #c0c0c0; border: 1px solid; border-color: #fff #000 #000 #fff; box-shadow: inset -1px -1px #808080; }
.wb .sp { margin-left: 2px; }
.wb svg { width: 13px; height: 11px; }
.menu { height: 20px; flex: none; background: #c0c0c0; display: flex; align-items: center; }
.mdi { width: 14px; height: 12px; margin: 0 7px 0 5px; border: 1px solid; border-color: #fff #000 #000 #fff; background: linear-gradient(#00f, #00f) 2px 3px / 8px 2px no-repeat #d8d8e8; }
.menu span:nth-of-type(1) { width: 28px; } .menu span:nth-of-type(2) { width: 30px; } .menu span:nth-of-type(3) { width: 35px; } .menu span:nth-of-type(4) { width: 45px; } .menu span:nth-of-type(5) { width: 37px; } .menu span:nth-of-type(6) { width: 50px; } .menu span:nth-of-type(7) { width: 40px; } .menu span:nth-of-type(8) { width: 38px; } .menu span:nth-of-type(9) { width: 51px; }

/* ribbon */
.ribbon { height: 78px; flex: none; background: #efeff2; border: 1px solid #c5c8d6; border-width: 1px 1px 1px 0; display: flex; padding: 2px 0; font-family: "Noto Sans", sans-serif; letter-spacing: -.35px; }
.grp { height: 71px; border-right: 1px solid #c8cad8; display: flex; padding-top: 5px; flex: none; white-space: nowrap; }
.col, .ic { display: flex; flex-direction: column; gap: 6px; }
.ic { width: 16px; }
.ic svg { width: 16px; height: 16px; overflow: visible; }
.d { background: #cdd3e0; }
.on { background: #fff; outline: 5px solid #fff; outline-offset: -1px; }
.m3 { margin-left: 3px; } .m4 { margin-left: 4px; } .m5 { margin-left: 5px; } .m6 { margin-left: 6px; } .m8 { margin-left: 8px; } .m9 { margin-left: 9px; } .m10 { margin-left: 10px; }
.sep { width: 1px; height: 58px; background: #8494a8; margin-top: 2px; }
.col > div { height: 16px; display: flex; align-items: center; gap: 3px; }
.off { color: #8d8f94; }
.off .i16 { background: #cdd3e0; }
.big { display: flex; flex-direction: column; align-items: center; }
.dd { width: 9px; height: 9px; background: #fff; display: inline-flex; align-items: center; justify-content: center; margin-left: 2px; }
.dd::before { content: ""; border: 3px solid transparent; border-top: 3px solid #666; border-bottom: 0; }
.g1 { width: 165px; }
.save { width: 53px; padding: 2px 0 0 3px; gap: 5px; }
.g1 .c2 { width: 53px; }
.g2 { width: 124px; padding: 2px 0 0 7px; flex-direction: column; letter-spacing: -.3px; }
.selrow { display: flex; align-items: center; justify-content: space-between; padding-right: 4px; height: 21px; }
.combo { height: 21px; background: #fff; border: 1px solid #dcdce4; padding: 0 3px 0 1px; display: flex; align-items: center; justify-content: space-between; letter-spacing: -.2px; }
.combo::after { content: ""; border: 3px solid transparent; border-top-color: #666; border-bottom: 0; }
.w75 { width: 75px; }
.nrow { display: flex; gap: 2px; align-items: center; margin: 3px 0 0 2px; }
.g3 { width: 63px; padding-left: 9px; }
.g4 { width: 121px; }
.zoomb { width: 51px; padding-top: 1px; gap: 4px; padding-left: 2px; }
.zoomb .dd { margin: -3px 0 0; height: 8px; }
.g4 .col > div { gap: 2px; } .g4 .dd { margin-left: 3px; }
.g4 .zoomb .dd { margin-left: 0; }
.g5 { width: 93px; padding-left: 9px; } .g5 .col > div { gap: 2px; }
.g5 .off { letter-spacing: -.2px; }
.g6 { width: 243px; padding-left: 9px; }
.g7 { width: 257px; padding-left: 9px; }
.dds { display: flex; flex-direction: column; gap: 13px; padding-top: 4px; }
.dds .dd { margin: 0; } .hid { visibility: hidden; }
.g8 { width: 87px; padding-left: 9px; letter-spacing: -.5px; } .g8 .col > div { gap: 2px; } .g8 .dd { margin-left: 2px; }
.g8 .col > div:last-child { margin-left: -1px; }
.hl { background: #cccccd; display: flex; align-items: center; gap: 2px; height: 22px; padding: 0 4px 0 3px; }
.g8 .hl { margin-left: -3px; width: 51px; }
.g9 { width: 77px; padding: 2px 4px 0 6px; flex-direction: column; }
.g9 .hl { width: 45px; gap: 3px; letter-spacing: -.6px; } .g9 .combo { margin-left: 1px; width: 65px; }
.g9 .combo, .g11 .combo { flex: none; margin-bottom: 1px; }
.g10 { width: 63px; padding: 2px 0 0 6px; flex-direction: column; }
.snap { width: 52px; display: grid; grid-template-columns: 16px 16px; column-gap: 10px; row-gap: 6px; padding: 3px 3px; background: #cccccd; height: 44px; }
.half { height: 22px; background: linear-gradient(#cccccd, #cccccd) 0 0 / 26px 22px no-repeat; }
.g11 { width: 92px; padding: 2px 4px 0 7px; flex-direction: column; }
.mt { display: flex; align-items: center; gap: 3px; padding-left: 1px; margin-top: 0; letter-spacing: -.5px; }
.g11 .off .i16 { background: none; }

.tabs { height: 22px; flex: none; background: #f0f0f1; display: flex; font-family: "Noto Sans", sans-serif; color: #444; letter-spacing: -.2px; }
.tabs span { height: 18px; line-height: 17px; text-align: center; }
.t1 { width: 68px; } .t2 { width: 50px; } .t4 { width: 56px; } .t5 { width: 78px; } .t6 { width: 64px; } .t7 { width: 84px; }
.tabs .t3 { width: 52px; height: 20px; margin-top: -1px; background: #efeff2; border: 1px solid #c5c8d6; border-top: 0; color: #11508a; line-height: 19px; }
.tr { margin-left: auto; display: flex; gap: 7px; padding: 1px 4px 0 0; }

/* docked panes */
.work { flex: 1; display: flex; min-height: 0; }
.strip { width: 22px; flex: none; padding: 4px 0 0 1px; }
.strip, .panes { background: radial-gradient(circle, #35507e 0 .8px, transparent .9px) 0 0 / 4px 4px, radial-gradient(circle, #35507e 0 .8px, transparent .9px) 2px 2px / 4px 4px, #808080; }
.vt { display: block; writing-mode: vertical-rl; width: 18px; height: 56px; line-height: 17px; background: #ccd3dc; border: 1px solid #24508a; border-left: 0; padding-top: 3px; font-family: "Noto Sans", sans-serif; letter-spacing: -.4px; font-size: 10.500px; }
.panes { flex: 1; display: flex; flex-direction: column; min-width: 0; }
.upper { height: 423px; flex: none; display: flex; }
.ph { margin: 0; height: 23px; flex: none; font: 11px/19px "Noto Sans", sans-serif; letter-spacing: -.15px; padding: 0 6px 1px 3px; background: linear-gradient(#d9dde1, #bdc1c6); border-bottom: 1px solid #a8acb2; display: flex; align-items: center; gap: 10px; white-space: nowrap; }
.ph svg { width: 9px; height: 9px; } .pn { margin-left: auto; }
.pm { width: 288px; background: #fff; margin-right: 7px; }
.cl .ph { letter-spacing: -.35px; }
.r { display: flex; align-items: center; height: 16px; white-space: nowrap; }
.r span, .r b { margin-left: 5px; }
.x { width: 9px; height: 9px; border: 1px solid #808080; background: linear-gradient(#000, #000) 1px 3px / 5px 1px no-repeat, linear-gradient(#000, #000) 3px 1px / 1px 5px no-repeat, #fff; margin-right: 6px; position: relative; }
.x.m { background: linear-gradient(#000, #000) 1px 3px / 5px 1px no-repeat, #fff; }
.x::after { content: ""; position: absolute; left: 8px; top: 3px; width: 6px; height: 1px; background: repeating-linear-gradient(90deg, #808080 0 1px, transparent 1px 2px); }
.x.none { border-color: transparent; background: none; }
.x.none::after { left: 3px; width: 11px; }
.ptree { background: repeating-linear-gradient(#808080 0 1px, #fff 1px 2px) 27px 16px / 1px 354px no-repeat; }
.ptree .r { height: 18px; padding-left: 23px; }
.ptree .root { padding-left: 4px; font-size: 12px; }
.root b { letter-spacing: .28px; }
.ptree .cur { background: #c0c0c0; height: 18px; line-height: 18px; font-size: 11.500px; letter-spacing: .42px; padding: 0 1px 0 2px; width: 218px; margin-left: 3px; }
.ptree span { letter-spacing: -.14px; }
.mtree { width: 289px; border: 1px solid #000; border-color: #000 #c0c0c0 #c0c0c0 #000; padding-left: 4px; margin-top: 1px; box-shadow: 1px 0 #eee; letter-spacing: -.15px;
  background: repeating-linear-gradient(#808080 0 1px, #fff 1px 2px) 8px 14px / 1px 378px no-repeat, repeating-linear-gradient(#808080 0 1px, #fff 1px 2px) 27px 30px / 1px 298px no-repeat, repeating-linear-gradient(#808080 0 1px, #fff 1px 2px) 46px 46px / 1px 266px no-repeat, #fff; height: 422px; flex: none; }
.d1 { padding-left: 19px; } .d2 { padding-left: 38px; }
.d3 { padding-left: 57px; background: repeating-linear-gradient(#808080 0 1px, transparent 1px 2px) 61px 0 / 1px 8px no-repeat; }
.r .foc { outline: 1px dotted #000; outline-offset: 0; margin-left: 4px; padding: 0 1px; line-height: 14px; }
.view { width: 666px; margin-left: 4px; box-shadow: -4px 0 #c0c0c0; border: 1px solid #000; border-color: #000 #c0c0c0 #ddd #000; margin-top: 1px; height: 421px; overflow: hidden; flex: none; }
.lab { font: 11.500px "Liberation Sans", sans-serif; }
.axl { font: 12px "DejaVu Sans Mono", monospace; }
.cl { width: 150px; margin-left: 6px; background: #c0c0c0; flex: none; }
.cbox { margin: 4px 0 0 4px; width: 142px; height: 372px; border: 1px solid; border-color: #fff #000 #000 #fff; box-shadow: inset -1px -1px #808080; padding: 3px 4px 0 3px; display: flex; flex-direction: column; }
.ctree { background: repeating-linear-gradient(#808080 0 1px, #fff 1px 2px) 8px 8px / 1px 28px no-repeat, repeating-linear-gradient(#808080 0 1px, #fff 1px 2px) 27px 48px / 1px 72px no-repeat, #fff; padding-left: 4px; flex: 1; overflow: hidden; letter-spacing: -.1px; }
.sel { background: #c0c0c0; box-shadow: 0 0 0 1px #c0c0c0; line-height: 15px; }
.hs { height: 16px; display: flex; background: repeating-conic-gradient(#fff 0 25%, #c0c0c0 0 50%) 0 0 / 2px 2px; margin-bottom: 1px; }
.hs b { width: 16px; background: #c0c0c0; border: 1px solid; border-color: #fff #000 #000 #fff; box-shadow: inset -1px -1px #808080; }
.hs svg { width: 13px; height: 13px; }
.hs .th { width: 75px; } .hs .rt { margin-left: auto; }
.ctab { width: 74px; height: 19px; margin: -1px 0 0 5px; position: relative; background: #c0c0c0; border: 1px solid #000; border-width: 0 1px 1px 0; text-align: center; line-height: 21px; letter-spacing: -.2px; }
.lower { flex: 1; margin-top: 6px; display: flex; min-height: 0; }
.mm { width: 706px; background: #c0c0c0; display: flex; flex-direction: column; }
.mb { flex: 1; margin: 0 2px 1px 1px; background: #fff; border: 1px solid #a0a0a0; border-top-color: #777; box-shadow: 0 1px #808080; }
.mm .ph { padding-right: 7px; }
.pg { flex: 1; margin-left: 5px; background: #fff; }
.status { height: 23px; flex: none; background: #cbd3dc; display: flex; align-items: center; padding-left: 3px; font-family: "Noto Sans", sans-serif; letter-spacing: -.25px; }
.status > span { margin-right: auto; margin-top: 2px; }
.sb { height: 20px; margin: 1px 2px 0 0; padding: 0 9px 0 6px; border: 1px solid; border-color: #000 #fff #fff #000; box-shadow: inset 1px 1px #808080; background: #d4d4d4; font: 13.500px/16px "Liberation Sans", sans-serif; display: flex; align-items: center; letter-spacing: .1px; white-space: nowrap; }
.s1 { width: 141px; gap: 7px; } .s2 { width: 126px; gap: 10px; margin-right: 7px; }
.grip { align-self: flex-end; }
```
